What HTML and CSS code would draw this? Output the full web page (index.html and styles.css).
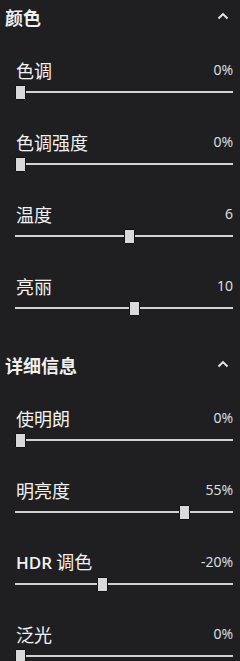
FILE: index.html
```html
<!DOCTYPE html>
<html lang="zh-CN">
<head>
<meta charset="utf-8">
<link rel="stylesheet" href="styles.css">
</head>
<body>
<div class="panel">
  <section class="section">
    <div class="section-head">
      <span class="section-title">颜色</span>
      <svg class="chevron" width="12" height="8" viewBox="0 0 12 8"><path d="M1.5 6.5 L6 2 L10.5 6.5" fill="none" stroke="#e6e6e6" stroke-width="1.9"/></svg>
    </div>
    <div class="row">
      <div class="row-head"><span class="label">色调</span><span class="value">0%</span></div>
      <div class="slider"><div class="track"></div><div class="thumb" style="left:0px"></div></div>
    </div>
    <div class="row">
      <div class="row-head"><span class="label">色调强度</span><span class="value">0%</span></div>
      <div class="slider"><div class="track"></div><div class="thumb" style="left:0px"></div></div>
    </div>
    <div class="row">
      <div class="row-head"><span class="label">温度</span><span class="value">6</span></div>
      <div class="slider"><div class="track"></div><div class="thumb" style="left:109px"></div></div>
    </div>
    <div class="row">
      <div class="row-head"><span class="label">亮丽</span><span class="value">10</span></div>
      <div class="slider"><div class="track"></div><div class="thumb" style="left:114px"></div></div>
    </div>
  </section>
  <section class="section">
    <div class="section-head">
      <span class="section-title">详细信息</span>
      <svg class="chevron" width="12" height="8" viewBox="0 0 12 8"><path d="M1.5 6.5 L6 2 L10.5 6.5" fill="none" stroke="#e6e6e6" stroke-width="1.9"/></svg>
    </div>
    <div class="row">
      <div class="row-head"><span class="label">使明朗</span><span class="value">0%</span></div>
      <div class="slider"><div class="track"></div><div class="thumb" style="left:0px"></div></div>
    </div>
    <div class="row">
      <div class="row-head"><span class="label">明亮度</span><span class="value">55%</span></div>
      <div class="slider"><div class="track"></div><div class="thumb" style="left:164px"></div></div>
    </div>
    <div class="row">
      <div class="row-head"><span class="label"><span class="latin">HDR</span> 调色</span><span class="value">-20%</span></div>
      <div class="slider"><div class="track"></div><div class="thumb" style="left:82px"></div></div>
    </div>
    <div class="row">
      <div class="row-head"><span class="label">泛光</span><span class="value">0%</span></div>
      <div class="slider"><div class="track"></div><div class="thumb" style="left:0px"></div></div>
    </div>
  </section>
</div>
</body>
</html>
```
FILE: styles.css
```css
html, body {
  margin: 0;
  padding: 0;
  background: #1f1f22;
}
body {
  font-family: "Noto Sans CJK SC", "Noto Sans", sans-serif;
  color: #ececec;
  width: 240px;
  height: 661px;
  overflow: hidden;
}
.panel {
  display: flex;
  flex-direction: column;
  gap: 16px;
}
.section {
  display: flex;
  flex-direction: column;
}
.section-head {
  height: 34px;
  margin-bottom: 10px;
  padding: 0 11px 0 5px;
  display: flex;
  align-items: center;
  justify-content: space-between;
}
.section-title {
  font-size: 18px;
  font-weight: 700;
  line-height: 34px;
  color: #f0f0f0;
}
.chevron {
  display: block;
  margin-top: -3px;
}
.row {
  padding: 16px 7px 16px 15px;
  display: flex;
  flex-direction: column;
  gap: 4px;
}
.row-head {
  height: 20px;
  display: flex;
  align-items: center;
  justify-content: space-between;
}
.label {
  font-size: 18px;
  line-height: 20px;
  color: #f2f2f2;
  padding-left: 1px;
}
.latin {
  font-family: "Open Sans", sans-serif;
  font-weight: 600;
  font-size: 17px;
}
.value {
  font-family: "Open Sans", sans-serif;
  font-size: 14px;
  line-height: 20px;
  color: #e2e2e2;
  margin-right: 0;
}
.slider {
  position: relative;
  height: 16px;
}
.track {
  position: absolute;
  left: 0;
  right: 0;
  top: 7px;
  height: 2px;
  background: #d2d2d2;
}
.thumb {
  position: absolute;
  top: 1px;
  width: 11px;
  height: 15px;
  box-sizing: border-box;
  background: #d9d9d9;
  border: 1px solid #111113;
  border-radius: 1px;
}
```
